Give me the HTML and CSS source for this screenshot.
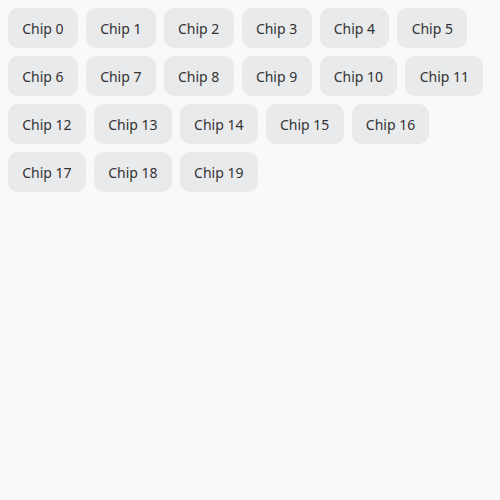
FILE: index.html
```html
<!DOCTYPE html>
<html>
<head>
<meta charset="utf-8">
<link rel="stylesheet" href="styles.css">
</head>
<body>
<div class="chips">
<span class="chip">Chip 0</span><span class="chip">Chip 1</span><span class="chip">Chip 2</span><span class="chip">Chip 3</span><span class="chip">Chip 4</span><span class="chip">Chip 5</span><span class="chip">Chip 6</span><span class="chip">Chip 7</span><span class="chip">Chip 8</span><span class="chip">Chip 9</span><span class="chip">Chip 10</span><span class="chip">Chip 11</span><span class="chip">Chip 12</span><span class="chip">Chip 13</span><span class="chip">Chip 14</span><span class="chip">Chip 15</span><span class="chip">Chip 16</span><span class="chip">Chip 17</span><span class="chip">Chip 18</span><span class="chip">Chip 19</span>
</div>
</body>
</html>
```
FILE: styles.css
```css
html, body { margin: 0; background: #f8f9fb; }
body { padding: 8px; font-family: "Noto Sans", sans-serif; }
.chips { display: flex; flex-wrap: wrap; gap: 8px; }
.chip {
  display: flex;
  align-items: center;
  height: 40px;
  box-sizing: border-box;
  padding: 0 14.25px;
  border-radius: 10px;
  background: #e9eaec;
  color: #333;
  font-size: 14px;
}
```
